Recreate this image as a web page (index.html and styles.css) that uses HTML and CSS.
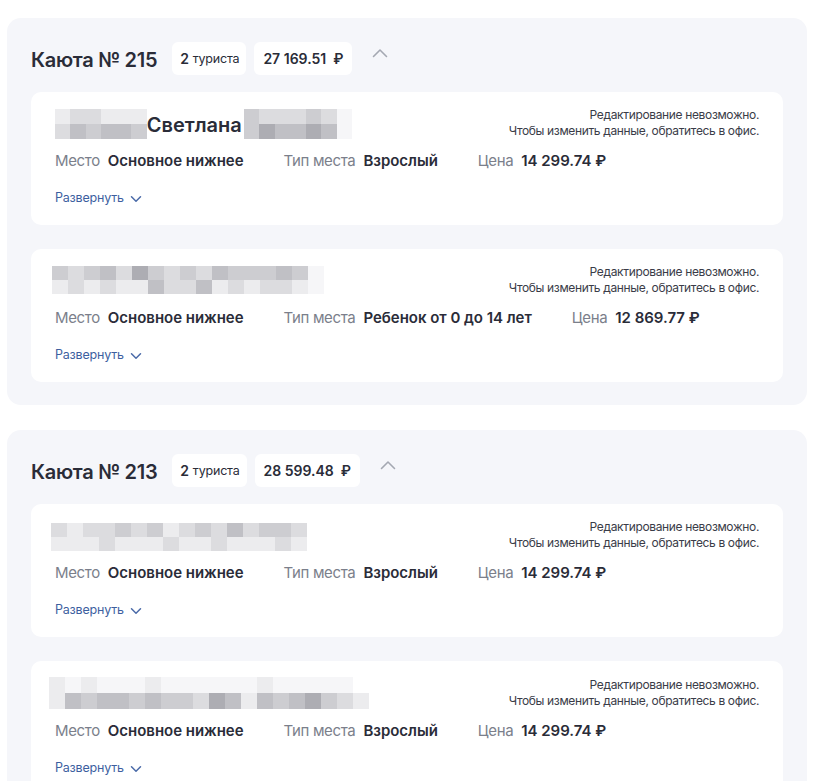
FILE: index.html
```html
<!DOCTYPE html>
<html lang="ru">
<head>
<meta charset="utf-8">
<link rel="stylesheet" href="styles.css">
</head>
<body>
<div class="page">
  <section class="cabin">
    <div class="cabin-head">
      <h2 class="cabin-title">Каюта № 215</h2>
      <span class="badge"><b>2</b> туриста</span>
      <span class="badge badge-price">27 169.51&nbsp; ₽</span>
      <svg class="chev-up" width="16" height="10" viewBox="0 0 16 10"><path d="M1.5 8.5 L8 2 L14.5 8.5" fill="none" stroke="#a4a8b2" stroke-width="1.6" stroke-linecap="round" stroke-linejoin="round"/></svg>
    </div>
    <div class="cards">
      <article class="card">
        <div class="card-top">
          <div class="name">
            <div class="pix w6"><i class="a"></i><i class="b"></i><i class="b"></i><i class="a"></i><i class="a"></i><i class="a"></i><i class="b"></i><i class="d"></i><i class="c"></i><i class="d"></i><i class="d"></i><i class="c"></i></div>
            <span class="name-text">Светлана</span>
            <div class="pix w7"><i class="c"></i><i class="b"></i><i class="b"></i><i class="b"></i><i class="c"></i><i class="b"></i><i class="z"></i><i class="c"></i><i class="e"></i><i class="d"></i><i class="d"></i><i class="e"></i><i class="d"></i><i class="z"></i></div>
          </div>
          <p class="note">Редактирование невозможно.<br>Чтобы изменить данные, обратитесь в офис.</p>
        </div>
        <div class="details">
          <span class="field"><span class="lbl">Место</span><span class="val">Основное нижнее</span></span>
          <span class="field"><span class="lbl">Тип места</span><span class="val">Взрослый</span></span>
          <span class="field"><span class="lbl">Цена</span><span class="val">14 299.74 ₽</span></span>
        </div>
        <a class="expand">Развернуть <svg width="12" height="8" viewBox="0 0 12 8"><path d="M1.5 1.8 L6 6.2 L10.5 1.8" fill="none" stroke="#4a6aa8" stroke-width="1.5" stroke-linecap="round" stroke-linejoin="round"/></svg></a>
      </article>
      <article class="card">
        <div class="card-top">
          <div class="name">
            <div class="pix w17 short"><i class="c"></i><i class="b"></i><i class="c"></i><i class="d"></i><i class="b"></i><i class="e"></i><i class="c"></i><i class="b"></i><i class="c"></i><i class="b"></i><i class="d"></i><i class="c"></i><i class="c"></i><i class="c"></i><i class="d"></i><i class="c"></i><i class="z"></i>
            <i class="a"></i><i class="b"></i><i class="a"></i><i class="b"></i><i class="a"></i><i class="a"></i><i class="d"></i><i class="b"></i><i class="b"></i><i class="d"></i><i class="a"></i><i class="b"></i><i class="a"></i><i class="b"></i><i class="b"></i><i class="a"></i><i class="z"></i></div>
          </div>
          <p class="note">Редактирование невозможно.<br>Чтобы изменить данные, обратитесь в офис.</p>
        </div>
        <div class="details">
          <span class="field"><span class="lbl">Место</span><span class="val">Основное нижнее</span></span>
          <span class="field"><span class="lbl">Тип места</span><span class="val">Ребенок от 0 до 14 лет</span></span>
          <span class="field"><span class="lbl">Цена</span><span class="val">12 869.77 ₽</span></span>
        </div>
        <a class="expand">Развернуть <svg width="12" height="8" viewBox="0 0 12 8"><path d="M1.5 1.8 L6 6.2 L10.5 1.8" fill="none" stroke="#4a6aa8" stroke-width="1.5" stroke-linecap="round" stroke-linejoin="round"/></svg></a>
      </article>
    </div>
  </section>

  <section class="cabin">
    <div class="cabin-head">
      <h2 class="cabin-title">Каюта № 213</h2>
      <span class="badge"><b>2</b> туриста</span>
      <span class="badge badge-price">28 599.48&nbsp; ₽</span>
      <svg class="chev-up" width="16" height="10" viewBox="0 0 16 10"><path d="M1.5 8.5 L8 2 L14.5 8.5" fill="none" stroke="#a4a8b2" stroke-width="1.6" stroke-linecap="round" stroke-linejoin="round"/></svg>
    </div>
    <div class="cards">
      <article class="card">
        <div class="card-top">
          <div class="name">
            <div class="pix w16 short"><i class="b"></i><i class="a"></i><i class="b"></i><i class="b"></i><i class="c"></i><i class="b"></i><i class="c"></i><i class="a"></i><i class="b"></i><i class="c"></i><i class="b"></i><i class="d"></i><i class="b"></i><i class="c"></i><i class="c"></i><i class="b"></i>
            <i class="a"></i><i class="a"></i><i class="a"></i><i class="b"></i><i class="a"></i><i class="a"></i><i class="a"></i><i class="b"></i><i class="a"></i><i class="a"></i><i class="b"></i><i class="a"></i><i class="a"></i><i class="a"></i><i class="b"></i><i class="a"></i></div>
          </div>
          <p class="note">Редактирование невозможно.<br>Чтобы изменить данные, обратитесь в офис.</p>
        </div>
        <div class="details">
          <span class="field"><span class="lbl">Место</span><span class="val">Основное нижнее</span></span>
          <span class="field"><span class="lbl">Тип места</span><span class="val">Взрослый</span></span>
          <span class="field"><span class="lbl">Цена</span><span class="val">14 299.74 ₽</span></span>
        </div>
        <a class="expand">Развернуть <svg width="12" height="8" viewBox="0 0 12 8"><path d="M1.5 1.8 L6 6.2 L10.5 1.8" fill="none" stroke="#4a6aa8" stroke-width="1.5" stroke-linecap="round" stroke-linejoin="round"/></svg></a>
      </article>
      <article class="card">
        <div class="card-top">
          <div class="name">
            <div class="pix w20"><i class="a"></i><i class="z"></i><i class="a"></i><i class="z"></i><i class="z"></i><i class="z"></i><i class="a"></i><i class="z"></i><i class="z"></i><i class="z"></i><i class="z"></i><i class="z"></i><i class="z"></i><i class="a"></i><i class="z"></i><i class="z"></i><i class="z"></i><i class="z"></i><i class="z"></i><i class="w"></i>
            <i class="a"></i><i class="d"></i><i class="c"></i><i class="d"></i><i class="d"></i><i class="c"></i><i class="d"></i><i class="c"></i><i class="c"></i><i class="b"></i><i class="e"></i><i class="d"></i><i class="a"></i><i class="d"></i><i class="c"></i><i class="d"></i><i class="e"></i><i class="c"></i><i class="b"></i><i class="a"></i></div>
          </div>
          <p class="note">Редактирование невозможно.<br>Чтобы изменить данные, обратитесь в офис.</p>
        </div>
        <div class="details">
          <span class="field"><span class="lbl">Место</span><span class="val">Основное нижнее</span></span>
          <span class="field"><span class="lbl">Тип места</span><span class="val">Взрослый</span></span>
          <span class="field"><span class="lbl">Цена</span><span class="val">14 299.74 ₽</span></span>
        </div>
        <a class="expand">Развернуть <svg width="12" height="8" viewBox="0 0 12 8"><path d="M1.5 1.8 L6 6.2 L10.5 1.8" fill="none" stroke="#4a6aa8" stroke-width="1.5" stroke-linecap="round" stroke-linejoin="round"/></svg></a>
      </article>
    </div>
  </section>
</div>
</body>
</html>
```

FILE: styles.css
```css
* { box-sizing: border-box; }
html, body { margin: 0; padding: 0; background: #fff; }
body {
  font-family: Inter, "Noto Sans", "Liberation Sans", sans-serif;
  color: #2a2c38;
  height: 781px;
  overflow: hidden;
}
.page {
  padding: 18px 17px 0 7px;
  display: flex;
  flex-direction: column;
  gap: 25px;
}
.cabin {
  background: #f5f6fa;
  border-radius: 14px;
  padding: 24px 24px 23px 24px;
}
.cabin-head {
  display: flex;
  align-items: center;
  height: 33px;
  margin-bottom: 17px;
}
.cabin-title {
  margin: 0 15px 0 0;
  font-size: 20px;
  font-weight: 600;
  letter-spacing: -0.3px;
  color: #2a2c38;
  position: relative;
  top: 1px;
}
.badge {
  background: #fff;
  border-radius: 6px;
  height: 33px;
  display: inline-flex;
  align-items: center;
  padding: 0 7px 0 8px;
  font-size: 12.5px;
  letter-spacing: -0.2px;
  color: #2a2c38;
  margin-right: 8px;
  white-space: nowrap;
}
.badge b { font-weight: 600; font-size: 14px; margin-right: 4px; }
.badge-price {
  font-size: 14px;
  font-weight: 600;
  letter-spacing: 0;
  padding: 0 9px;
}
.chev-up { margin-left: 12px; margin-top: -12px; }
.cards { display: flex; flex-direction: column; gap: 24px; }
.card {
  background: #fff;
  border-radius: 10px;
  height: 133px;
  padding: 15px 24px 0 24px;
  display: flex;
  flex-direction: column;
}
.card-top {
  display: flex;
  justify-content: space-between;
  align-items: center;
  min-height: 32px;
}
.name { display: flex; align-items: center; }
.name-text {
  font-size: 20px;
  font-weight: 600;
  color: #2a2c38;
  margin-top: 3px;
  padding-right: 2px;
}
.pix {
  display: grid;
  grid-auto-rows: 15px;
}
.pix.short { grid-auto-rows: 14px; }
.pix.w6 { grid-template-columns: repeat(6, 15.3px); margin-top: 2px; }
.pix.w7 { grid-template-columns: repeat(7, 15.5px); margin-top: 2px; }
.pix.w16 { grid-template-columns: repeat(16, 16px); margin-left: -4px; margin-top: 3px; }
.pix.w17 { grid-template-columns: repeat(17, 16px); margin-left: -3px; }
.pix.w20 { grid-template-columns: repeat(20, 16px); margin-left: -6px; grid-auto-rows: 16px; margin-top: 1px; }
.pix i { display: block; }
.pix .w { background: #ffffff; }
.pix .z { background: #f6f6f8; }
.pix .a { background: #ececee; }
.pix .b { background: #dcdcdf; }
.pix .c { background: #cdcdd1; }
.pix .d { background: #c0c0c5; }
.pix .e { background: #adadb3; }
.note {
  margin: 0;
  text-align: right;
  font-size: 12px;
  line-height: 16px;
  letter-spacing: -0.35px;
  color: #3a3c48;
}
.details {
  display: flex;
  gap: 40px;
  margin-top: 12px;
  font-size: 15px;
  line-height: 20px;
}
.field { display: inline-flex; gap: 8px; white-space: nowrap; }
.lbl { color: #7b7f8b; letter-spacing: -0.35px; }
.val { font-weight: 600; color: #2a2c38; letter-spacing: -0.03px; }
.expand {
  margin-top: 18px;
  font-size: 12.5px;
  line-height: 18px;
  color: #3d5f9f;
  display: inline-flex;
  align-items: center;
  gap: 6px;
  letter-spacing: -0.2px;
  align-self: flex-start;
}
.expand svg { margin-top: 2px; }
```
